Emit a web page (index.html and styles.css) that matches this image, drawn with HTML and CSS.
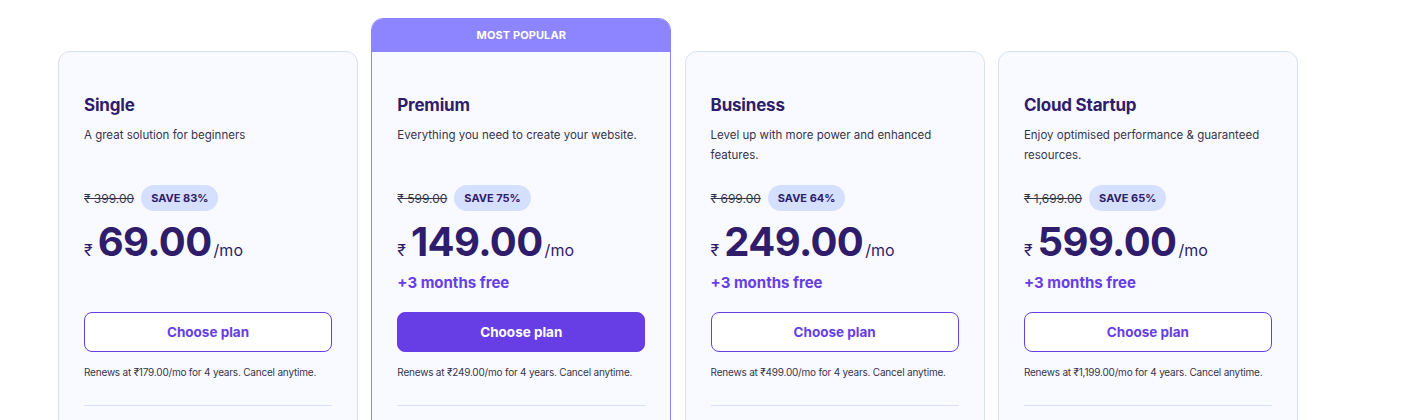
FILE: index.html
```html
<!DOCTYPE html>
<html>
<head>
<meta charset="utf-8">
<link rel="stylesheet" href="styles.css">
</head>
<body>
<div class="plans">
  <div class="plan">
    <div class="plan-body">
      <h3 class="plan-title">Single</h3>
      <p class="plan-desc">A great solution for beginners</p>
      <div class="old-row"><span class="old-price">₹ 399.00</span><span class="save">SAVE 83%</span></div>
      <div class="price"><span class="cur">₹</span><span class="amount">69.00</span><span class="per">/mo</span></div>
      <div class="bonus"></div>
      <button class="btn">Choose plan</button>
      <p class="renew">Renews at ₹179.00/mo for 4 years. Cancel anytime.</p>
      <hr class="divider">
    </div>
  </div>
  <div class="plan featured">
    <div class="ribbon">MOST POPULAR</div>
    <div class="plan-body">
      <h3 class="plan-title">Premium</h3>
      <p class="plan-desc">Everything you need to create your website.</p>
      <div class="old-row"><span class="old-price">₹ 599.00</span><span class="save">SAVE 75%</span></div>
      <div class="price"><span class="cur">₹</span><span class="amount">149.00</span><span class="per">/mo</span></div>
      <div class="bonus">+3 months free</div>
      <button class="btn btn-primary">Choose plan</button>
      <p class="renew">Renews at ₹249.00/mo for 4 years. Cancel anytime.</p>
      <hr class="divider">
    </div>
  </div>
  <div class="plan">
    <div class="plan-body">
      <h3 class="plan-title">Business</h3>
      <p class="plan-desc">Level up with more power and enhanced features.</p>
      <div class="old-row"><span class="old-price">₹ 699.00</span><span class="save">SAVE 64%</span></div>
      <div class="price"><span class="cur">₹</span><span class="amount">249.00</span><span class="per">/mo</span></div>
      <div class="bonus">+3 months free</div>
      <button class="btn">Choose plan</button>
      <p class="renew">Renews at ₹499.00/mo for 4 years. Cancel anytime.</p>
      <hr class="divider">
    </div>
  </div>
  <div class="plan">
    <div class="plan-body">
      <h3 class="plan-title">Cloud Startup</h3>
      <p class="plan-desc">Enjoy optimised performance &amp; guaranteed resources.</p>
      <div class="old-row"><span class="old-price">₹ 1,699.00</span><span class="save">SAVE 65%</span></div>
      <div class="price"><span class="cur">₹</span><span class="amount">599.00</span><span class="per">/mo</span></div>
      <div class="bonus">+3 months free</div>
      <button class="btn">Choose plan</button>
      <p class="renew">Renews at ₹1,199.00/mo for 4 years. Cancel anytime.</p>
      <hr class="divider">
    </div>
  </div>
</div>
</body>
</html>
```
FILE: styles.css
```css
* { box-sizing: border-box; }
html, body { margin: 0; padding: 0; background: #ffffff; }
body {
  font-family: "Inter", "Noto Sans", "DejaVu Sans", sans-serif;
  color: #36344d;
  overflow: hidden;
}
.plans {
  display: flex;
  align-items: flex-start;
  gap: 13.3px;
  padding: 18px 0 0 58px;
}
.plan {
  width: 300px;
  flex: 0 0 300px;
  margin-top: 33px;
  background: #f9faff;
  border: 1px solid #dae0f5;
  border-radius: 12px;
  min-height: 500px;
}
.plan.featured {
  margin-top: 0;
  border-color: #8c85ff;
  overflow: hidden;
}
.ribbon {
  height: 33px;
  background: #8c85ff;
  color: #ffffff;
  font-size: 11px;
  font-weight: 700;
  text-align: center;
  line-height: 33px;
  letter-spacing: 0.1px;
}
.plan-body {
  padding: 41px 25px 0 25px;
  display: flex;
  flex-direction: column;
}
.plan-title {
  margin: 0;
  font-size: 17px;
  line-height: 24px;
  font-weight: 700;
  color: #2f1c6a;
  letter-spacing: -0.2px;
}
.plan-desc {
  margin: 8px 0 0 0;
  font-size: 11.5px;
  line-height: 20px;
  min-height: 40px;
  color: #36344d;
}
.old-row {
  margin-top: 20px;
  display: flex;
  align-items: center;
  gap: 7px;
  height: 26px;
}
.old-price {
  font-size: 12px;
  color: #36344d;
  text-decoration: line-through;
}
.save {
  background: #d5dfff;
  color: #2f1c6a;
  font-size: 11px;
  font-weight: 700;
  height: 26px;
  line-height: 26px;
  padding: 0 10px;
  border-radius: 13px;
}
.price {
  margin-top: 6px;
  display: flex;
  align-items: baseline;
  height: 50px;
  color: #2f1c6a;
}
.cur {
  font-size: 16px;
  margin-right: 5px;
}
.amount {
  font-size: 40px;
  font-weight: 700;
  line-height: 50px;
  letter-spacing: -0.6px;
}
.per {
  font-size: 16px;
  margin-left: 2px;
}
.bonus {
  height: 30px;
  font-size: 15px;
  line-height: 30px;
  font-weight: 700;
  color: #673de6;
  margin-top: 1px;
}
.btn {
  margin-top: 14px;
  height: 40px;
  width: 100%;
  border: 1px solid #673de6;
  border-radius: 8px;
  background: #ffffff;
  color: #673de6;
  font-family: inherit;
  font-size: 13.5px;
  font-weight: 700;
  cursor: pointer;
}
.btn-primary {
  background: #673de6;
  color: #ffffff;
}
.renew {
  margin: 13px 0 0 0;
  font-size: 10px;
  line-height: 14px;
  color: #36344d;
  letter-spacing: -0.2px;
  white-space: nowrap;
}
.divider {
  margin: 26px 0 0 0;
  border: 0;
  border-top: 1px solid #dae0f5;
}
```
